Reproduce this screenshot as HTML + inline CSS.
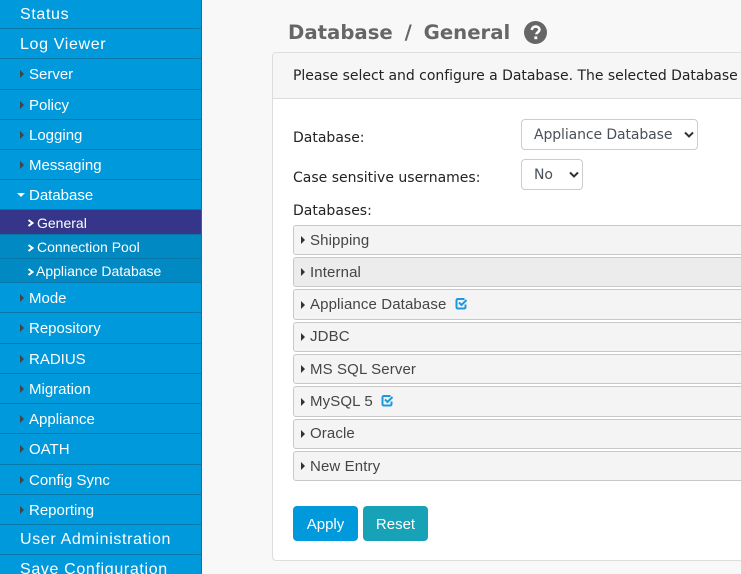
<!DOCTYPE html>
<html><head><meta charset="utf-8"><style>
html,body{margin:0;padding:0;width:741px;height:574px;overflow:hidden;background:#f8f8f8;font-family:"Liberation Sans",sans-serif}
*{box-sizing:border-box}
#side{position:absolute;left:0;top:0;width:202px;height:574px;background:#0099dc;border-right:1px solid #0b74a8;overflow:hidden}
.r{position:absolute;left:0;width:201px;color:#fff;font-size:15px;white-space:nowrap;border-bottom:1px solid #0878ab}
.r span{position:absolute;left:29px;top:1px;line-height:inherit}
.r.t span{left:20px;font-size:16px;letter-spacing:.65px;top:0}
.r.a::before{content:"";position:absolute;left:20px;top:50%;margin-top:-4px;border-left:4px solid #444;border-top:4px solid transparent;border-bottom:4px solid transparent}
.r.d::before{content:"";position:absolute;left:17px;top:50%;margin-top:-2px;border-top:4px solid #fff;border-left:4px solid transparent;border-right:4px solid transparent}
.s{background:#0089c2;font-size:14px}
.s span{left:37px;top:0}
.s.sel{background:#35358a}
.s svg{position:absolute;left:27px;top:50%;margin-top:-3px}
#title{position:absolute;left:288px;top:18px;font:bold 19.7px/30px "DejaVu Sans",sans-serif;color:#666;white-space:nowrap;word-spacing:5px}
#panel{position:absolute;left:272px;top:52px;width:480px;height:509px;background:#fff;border:1px solid #ddd;border-radius:4px;overflow:hidden}
#head{position:absolute;left:0;top:0;width:100%;height:46px;background:#f6f6f6;border-bottom:1px solid #ddd}
.tx{position:absolute;font:14px/20px "DejaVu Sans",sans-serif;color:#222;white-space:nowrap}
.sl{position:absolute;left:248px;height:31px;background:#fff;border:1px solid #ccc;border-radius:4px;font:14px/31px "DejaVu Sans",sans-serif;color:#495057;padding-left:12px;white-space:nowrap;letter-spacing:-.1px}
.sl svg{position:absolute;top:11px}
.acc{position:absolute;left:20px;width:470px;background:#f4f4f4;border:1px solid #c8c8c8;border-radius:3px;font-size:15px;color:#454545;white-space:nowrap}
.acc b{position:absolute;left:7px;top:50%;margin-top:-4px;width:0;height:0;border-left:4px solid #333;border-top:4px solid transparent;border-bottom:4px solid transparent}
.acc span{position:absolute;left:16px;top:0;letter-spacing:.12px}
.acc svg{position:absolute;top:7px}
.btn{position:absolute;top:453px;height:35px;width:65px;border-radius:4px;color:#fff;font-size:15px;line-height:37px;text-align:center}
</style></head><body>
<div id="side">
<div class="r t" style="top:0;height:29px;line-height:29px"><span>Status</span></div>
<div class="r t" style="top:29px;height:30px;line-height:31px"><span>Log Viewer</span></div>
<div class="r a" style="top:59px;height:31px;line-height:29px"><span>Server</span></div>
<div class="r a" style="top:90px;height:30px;line-height:29px"><span>Policy</span></div>
<div class="r a" style="top:120px;height:30px;line-height:29px"><span>Logging</span></div>
<div class="r a" style="top:150px;height:30px;line-height:29px"><span>Messaging</span></div>
<div class="r d" style="top:180px;height:30px;line-height:29px"><span>Database</span></div>
<div class="r s sel" style="top:210px;height:25px;line-height:26px"><svg width="8" height="8" viewBox="0 0 8 8"><path d="M1.5 1L5.5 4L1.5 7" fill="none" stroke="#fff" stroke-width="2"/></svg><span>General</span></div>
<div class="r s" style="top:235px;height:24px;line-height:24px"><svg width="8" height="8" viewBox="0 0 8 8"><path d="M1.5 1L5.5 4L1.5 7" fill="none" stroke="#fff" stroke-width="2"/></svg><span>Connection Pool</span></div>
<div class="r s" style="top:259px;height:24px;line-height:24px"><svg width="8" height="8" viewBox="0 0 8 8"><path d="M1.5 1L5.5 4L1.5 7" fill="none" stroke="#fff" stroke-width="2"/></svg><span style="left:36px">Appliance Database</span></div>
<div class="r a" style="top:283px;height:30px;line-height:29px"><span>Mode</span></div>
<div class="r a" style="top:313px;height:31px;line-height:29px"><span>Repository</span></div>
<div class="r a" style="top:344px;height:30px;line-height:29px"><span>RADIUS</span></div>
<div class="r a" style="top:374px;height:30px;line-height:29px"><span>Migration</span></div>
<div class="r a" style="top:404px;height:30px;line-height:29px"><span>Appliance</span></div>
<div class="r a" style="top:434px;height:31px;line-height:29px"><span>OATH</span></div>
<div class="r a" style="top:465px;height:30px;line-height:29px"><span>Config Sync</span></div>
<div class="r a" style="top:495px;height:30px;line-height:29px"><span>Reporting</span></div>
<div class="r t" style="top:525px;height:30px;line-height:30px"><span>User Administration</span></div>
<div class="r t" style="top:555px;height:30px;line-height:30px"><span>Save Configuration</span></div>
</div>
<div id="title">Database / General</div>
<svg style="position:absolute;left:524px;top:21px" width="23" height="23" viewBox="0 0 23 23"><circle cx="11.5" cy="11.5" r="11.5" fill="#666"/><path d="M7.8 9C8 6.8 9.6 5.6 11.7 5.6C13.8 5.6 15.4 6.9 15.4 8.8C15.4 11.2 12.4 11.3 12.4 13.4" fill="none" stroke="#fff" stroke-width="2.6"/><rect x="10.3" y="15.4" width="3" height="2.8" fill="#fff"/></svg>
<div id="panel">
<div id="head"></div>
<div class="tx" style="left:20px;top:13px;letter-spacing:-.03px">Please select and configure a Database. The selected Database will be used</div>
<div class="tx" style="left:20px;top:75px">Database:</div>
<div class="sl" style="top:66px;width:177px">Appliance Database<svg style="left:162px" width="10" height="8" viewBox="0 0 10 8"><path d="M1 1.5L5 5.5L9 1.5" fill="none" stroke="#333" stroke-width="2"/></svg></div>
<div class="tx" style="left:20px;top:115px">Case sensitive usernames:</div>
<div class="sl" style="top:106px;width:62px">No<svg style="left:47px" width="10" height="8" viewBox="0 0 10 8"><path d="M1 1.5L5 5.5L9 1.5" fill="none" stroke="#333" stroke-width="2"/></svg></div>
<div class="tx" style="left:20px;top:148px">Databases:</div>
<div class="acc" style="top:172px;height:30px;line-height:30px"><b></b><span>Shipping</span></div>
<div class="acc" style="top:204px;height:30px;line-height:29px;background:#ececec"><b></b><span>Internal</span></div>
<div class="acc" style="top:236px;height:31px;line-height:29px"><b></b><span>Appliance Database</span><svg style="left:161px" width="13" height="13" viewBox="0 0 13 13"><path d="M10.5 7.5V10Q10.5 11.5 9 11.5H3Q1.5 11.5 1.5 10V3.5Q1.5 2 3 2H9.5" fill="none" stroke="#1b9ae0" stroke-width="2"/><path d="M4 5.5L6.5 8L11.5 3" fill="none" stroke="#1b9ae0" stroke-width="2"/></svg></div>
<div class="acc" style="top:269px;height:30px;line-height:28px"><b></b><span>JDBC</span></div>
<div class="acc" style="top:301px;height:30px;line-height:29px"><b></b><span>MS SQL Server</span></div>
<div class="acc" style="top:333px;height:31px;line-height:29px"><b></b><span>MySQL 5</span><svg style="left:87px" width="13" height="13" viewBox="0 0 13 13"><path d="M10.5 7.5V10Q10.5 11.5 9 11.5H3Q1.5 11.5 1.5 10V3.5Q1.5 2 3 2H9.5" fill="none" stroke="#1b9ae0" stroke-width="2"/><path d="M4 5.5L6.5 8L11.5 3" fill="none" stroke="#1b9ae0" stroke-width="2"/></svg></div>
<div class="acc" style="top:366px;height:30px;line-height:28px"><b></b><span>Oracle</span></div>
<div class="acc" style="top:398px;height:30px;line-height:29px"><b></b><span>New Entry</span></div>
<div class="btn" style="left:20px;background:#0099dc">Apply</div>
<div class="btn" style="left:90px;background:#17a2b8">Reset</div>
</div>
</body></html>
